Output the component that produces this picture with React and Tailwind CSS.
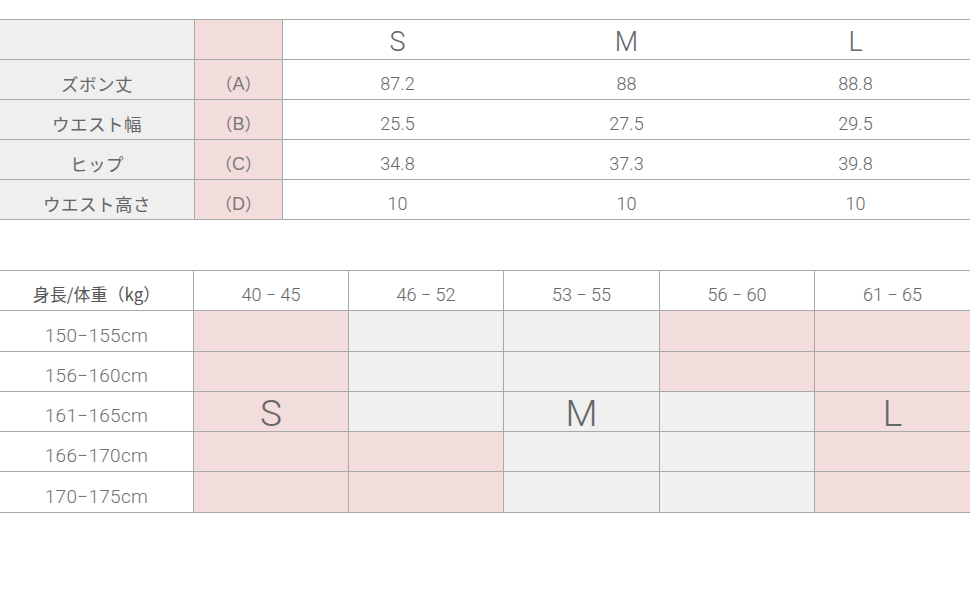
import React from "react";

const line = "border-[#a9a9a9]";
const PINK = "bg-[#f2dcdc]";
const GRAY = "bg-[#f0f0f0]";

const jp = { fontFamily: '"Noto Sans CJK JP", sans-serif' };
const num = { fontFamily: 'Roboto, "Liberation Sans", sans-serif' };
const lab = { fontFamily: '"Liberation Sans", Arial, sans-serif' };

function Table1() {
  const rows = [
    ["ズボン丈", "A", "87.2", "88", "88.8"],
    ["ウエスト幅", "B", "25.5", "27.5", "29.5"],
    ["ヒップ", "C", "34.8", "37.3", "39.8"],
    ["ウエスト高さ", "D", "10", "10", "10"],
  ];
  return (
    <div className={`mt-[19px] border-t ${line}`}>
      <div className={`flex h-[40px] border-b ${line}`}>
        <div className={`w-[195px] border-r ${line} bg-[#efefef]`} />
        <div className={`w-[88px] border-r ${line} ${PINK}`} />
        {["S", "M", "L"].map((s) => (
          <div key={s} className="flex-1 flex items-center justify-center text-[27px] leading-none font-light text-[#666] pt-[6px]" style={num}>
            {s}
          </div>
        ))}
      </div>
      {rows.map((r) => (
        <div key={r[0]} className={`flex h-[40px] border-b ${line}`}>
          <div className={`w-[195px] border-r ${line} bg-[#efefef] flex items-center justify-center text-[17.5px] tracking-[0.5px] leading-none text-[#666] pt-[8px]`} style={jp}>
            {r[0]}
          </div>
          <div className={`w-[88px] border-r ${line} ${PINK} flex items-center justify-center text-[17px] leading-none text-[#7a7a7a] pt-[8px]`} style={jp}>
            <span>（</span>
            <span style={lab} className="text-[18px]">{r[1]}</span>
            <span>）</span>
          </div>
          {r.slice(2).map((v, i) => (
            <div key={i} className="flex-1 flex items-center justify-center text-[18px] leading-none font-light text-[#666] pt-[8px]" style={num}>
              {v}
            </div>
          ))}
        </div>
      ))}
    </div>
  );
}

function Table2() {
  const heads = ["40 − 45", "46 − 52", "53 − 55", "56 − 60", "61 − 65"];
  const rows = [
    { label: "150−155cm", h: "h-[41px]", c: ["p", "g", "g", "p", "p"], t: ["", "", "", "", ""] },
    { label: "156−160cm", h: "h-[40px]", c: ["p", "g", "g", "p", "p"], t: ["", "", "", "", ""] },
    { label: "161−165cm", h: "h-[40px]", c: ["p", "g", "g", "g", "p"], t: ["S", "", "M", "", "L"] },
    { label: "166−170cm", h: "h-[40px]", c: ["p", "p", "g", "g", "p"], t: ["", "", "", "", ""] },
    { label: "170−175cm", h: "h-[41px]", c: ["p", "p", "g", "g", "p"], t: ["", "", "", "", ""] },
  ];
  const cols = "grid grid-cols-[194px_155px_155px_156px_155px_1fr] grid-rows-[100%]";
  return (
    <div className={`mt-[50px] border-t ${line}`}>
      <div className={`${cols} h-[40px] border-b ${line}`}>
        <div className={`border-r ${line} flex items-center justify-center text-[17px] leading-none text-[#555] pt-[6px]`} style={jp}>
          身長/体重（kg）
        </div>
        {heads.map((h, i) => (
          <div key={h} className={`${i < 4 ? `border-r ${line}` : ""} flex items-center justify-center text-[18px] leading-none font-light text-[#666] pt-[8px]`} style={num}>
            {h}
          </div>
        ))}
      </div>
      {rows.map((r) => (
        <div key={r.label} className={`${cols} ${r.h} border-b ${line}`}>
          <div className={`border-r ${line} flex items-center justify-center text-[19px] tracking-[0.3px] leading-none font-light text-[#707070] pt-[8px]`} style={num}>
            {r.label}
          </div>
          {r.c.map((c, i) => (
            <div
              key={i}
              className={`${i < 4 ? `border-r ${line}` : ""} ${c === "p" ? PINK : GRAY} min-h-0 flex items-center justify-center text-[37px] leading-none font-light text-[#666] pt-[4px]`}
              style={num}
            >
              {r.t[i]}
            </div>
          ))}
        </div>
      ))}
    </div>
  );
}

export default function App() {
  return (
    <div className="w-[970px] h-[600px] bg-white overflow-hidden">
      <Table1 />
      <Table2 />
    </div>
  );
}
